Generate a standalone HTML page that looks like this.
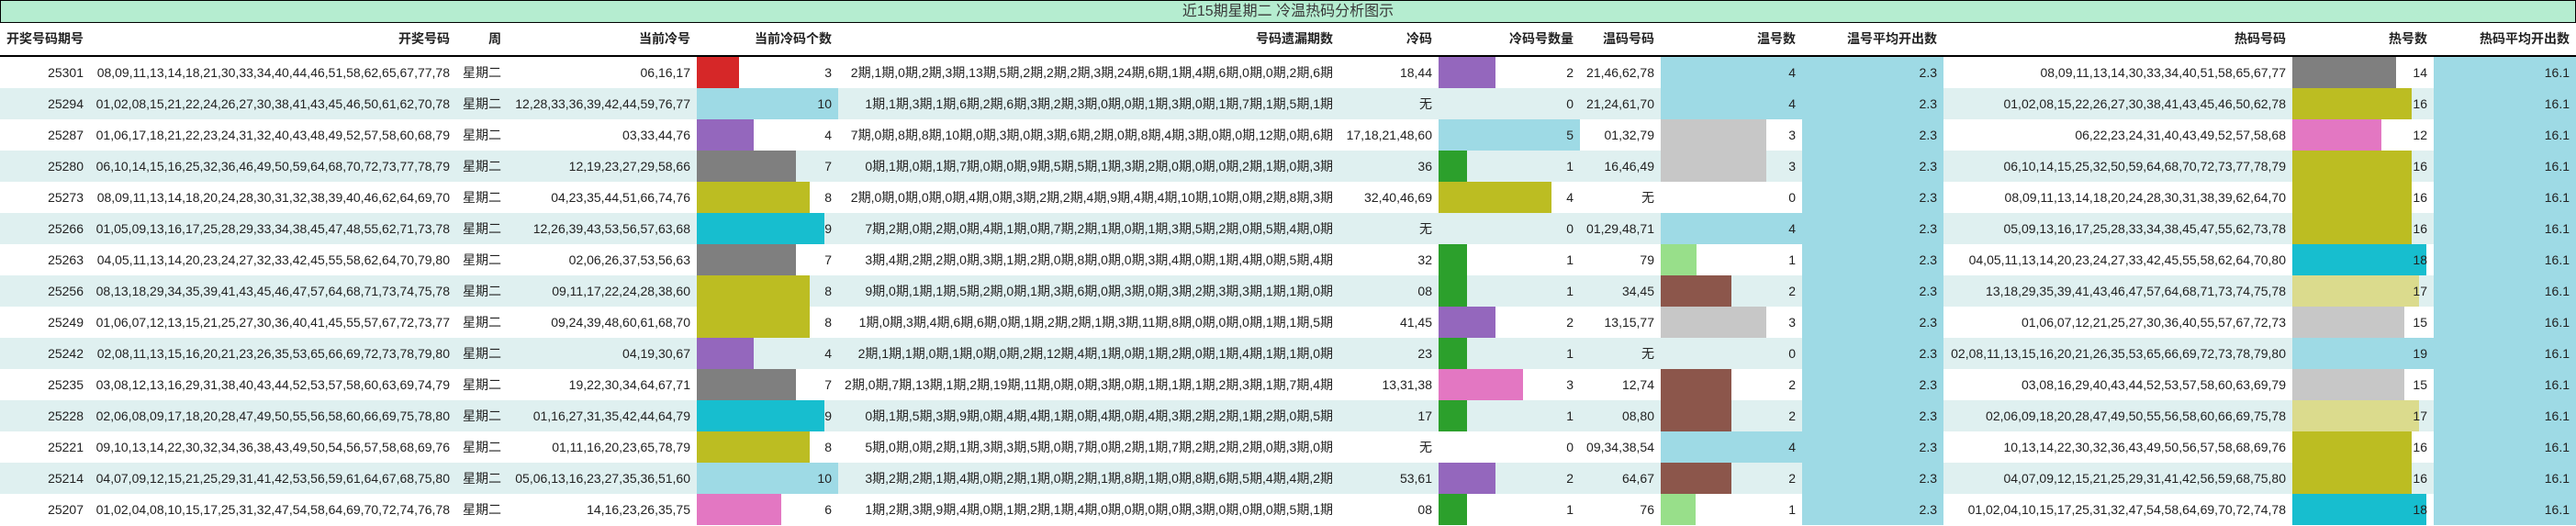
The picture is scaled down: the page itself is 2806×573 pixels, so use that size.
<!DOCTYPE html>
<html><head><meta charset="utf-8">
<style>
html,body{margin:0;padding:0;background:#fff;}
body{width:2806px;height:573px;position:relative;overflow:hidden;font-family:"Liberation Sans","Noto Sans CJK SC",sans-serif;color:#222;}
.title{position:absolute;left:0;top:0;width:2806px;height:25px;box-sizing:border-box;border:1px solid #000;background:#b5edd0;text-align:center;font-size:16px;line-height:23px;color:#3a3a3a;}
table{position:absolute;left:0;top:25px;border-collapse:collapse;table-layout:fixed;width:2806px;font-size:14px;}
td{padding:0 7px 0 0;text-align:right;white-space:nowrap;overflow:visible;height:34px;line-height:34px;position:relative;}
tr.h td{font-weight:bold;height:35px;border-bottom:2px solid #000;line-height:35px;}
tr.s td{background:#dff0f0;}
td.c,tr.s td.c{background:#9edae5;}
td i{position:absolute;left:0;top:0;bottom:0;}
td span{position:relative;z-index:1;}
</style></head><body>
<div class="title">近15期星期二 冷温热码分析图示</div>
<table>
<colgroup><col style="width:98px"><col style="width:399px"><col style="width:56px"><col style="width:206px"><col style="width:154px"><col style="width:546px"><col style="width:108px"><col style="width:154px"><col style="width:88px"><col style="width:154px"><col style="width:154px"><col style="width:380px"><col style="width:154px"><col style="width:155px"></colgroup>
<tr class="h"><td>开奖号码期号</td><td>开奖号码</td><td>周</td><td>当前冷号</td><td>当前冷码个数</td><td>号码遗漏期数</td><td>冷码</td><td>冷码号数量</td><td>温码号码</td><td>温号数</td><td>温号平均开出数</td><td>热码号码</td><td>热号数</td><td>热码平均开出数</td></tr>

<tr><td>25301</td><td>08,09,11,13,14,18,21,30,33,34,40,44,46,51,58,62,65,67,77,78</td><td>星期二</td><td>06,16,17</td><td><i style="width:46px;background:#d62728"></i><span>3</span></td><td>2期,1期,0期,2期,3期,13期,5期,2期,2期,2期,3期,24期,6期,1期,4期,6期,0期,0期,2期,6期</td><td>18,44</td><td><i style="width:62px;background:#9467bd"></i><span>2</span></td><td>21,46,62,78</td><td><i style="width:154px;background:#9edae5"></i><span>4</span></td><td class="c">2.3</td><td>08,09,11,13,14,30,33,34,40,51,58,65,67,77</td><td><i style="width:113px;background:#7f7f7f"></i><span>14</span></td><td class="c">16.1</td></tr>

<tr class="s"><td>25294</td><td>01,02,08,15,21,22,24,26,27,30,38,41,43,45,46,50,61,62,70,78</td><td>星期二</td><td>12,28,33,36,39,42,44,59,76,77</td><td><i style="width:154px;background:#9edae5"></i><span>10</span></td><td>1期,1期,3期,1期,6期,2期,6期,3期,2期,3期,0期,0期,1期,3期,0期,1期,7期,1期,5期,1期</td><td>无</td><td><span>0</span></td><td>21,24,61,70</td><td><i style="width:154px;background:#9edae5"></i><span>4</span></td><td class="c">2.3</td><td>01,02,08,15,22,26,27,30,38,41,43,45,46,50,62,78</td><td><i style="width:130px;background:#bcbd22"></i><span>16</span></td><td class="c">16.1</td></tr>

<tr><td>25287</td><td>01,06,17,18,21,22,23,24,31,32,40,43,48,49,52,57,58,60,68,79</td><td>星期二</td><td>03,33,44,76</td><td><i style="width:62px;background:#9467bd"></i><span>4</span></td><td>7期,0期,8期,8期,10期,0期,3期,0期,3期,6期,2期,0期,8期,4期,3期,0期,0期,12期,0期,6期</td><td>17,18,21,48,60</td><td><i style="width:154px;background:#9edae5"></i><span>5</span></td><td>01,32,79</td><td><i style="width:115px;background:#c7c7c7"></i><span>3</span></td><td class="c">2.3</td><td>06,22,23,24,31,40,43,49,52,57,58,68</td><td><i style="width:97px;background:#e377c2"></i><span>12</span></td><td class="c">16.1</td></tr>

<tr class="s"><td>25280</td><td>06,10,14,15,16,25,32,36,46,49,50,59,64,68,70,72,73,77,78,79</td><td>星期二</td><td>12,19,23,27,29,58,66</td><td><i style="width:108px;background:#7f7f7f"></i><span>7</span></td><td>0期,1期,0期,1期,7期,0期,0期,9期,5期,5期,1期,3期,2期,0期,0期,0期,2期,1期,0期,3期</td><td>36</td><td><i style="width:31px;background:#2ca02c"></i><span>1</span></td><td>16,46,49</td><td><i style="width:115px;background:#c7c7c7"></i><span>3</span></td><td class="c">2.3</td><td>06,10,14,15,25,32,50,59,64,68,70,72,73,77,78,79</td><td><i style="width:130px;background:#bcbd22"></i><span>16</span></td><td class="c">16.1</td></tr>

<tr><td>25273</td><td>08,09,11,13,14,18,20,24,28,30,31,32,38,39,40,46,62,64,69,70</td><td>星期二</td><td>04,23,35,44,51,66,74,76</td><td><i style="width:123px;background:#bcbd22"></i><span>8</span></td><td>2期,0期,0期,0期,0期,4期,0期,3期,2期,2期,4期,9期,4期,4期,10期,10期,0期,2期,8期,3期</td><td>32,40,46,69</td><td><i style="width:123px;background:#bcbd22"></i><span>4</span></td><td>无</td><td><span>0</span></td><td class="c">2.3</td><td>08,09,11,13,14,18,20,24,28,30,31,38,39,62,64,70</td><td><i style="width:130px;background:#bcbd22"></i><span>16</span></td><td class="c">16.1</td></tr>

<tr class="s"><td>25266</td><td>01,05,09,13,16,17,25,28,29,33,34,38,45,47,48,55,62,71,73,78</td><td>星期二</td><td>12,26,39,43,53,56,57,63,68</td><td><i style="width:139px;background:#17becf"></i><span>9</span></td><td>7期,2期,0期,2期,0期,4期,1期,0期,7期,2期,1期,0期,1期,3期,5期,2期,0期,5期,4期,0期</td><td>无</td><td><span>0</span></td><td>01,29,48,71</td><td><i style="width:154px;background:#9edae5"></i><span>4</span></td><td class="c">2.3</td><td>05,09,13,16,17,25,28,33,34,38,45,47,55,62,73,78</td><td><i style="width:130px;background:#bcbd22"></i><span>16</span></td><td class="c">16.1</td></tr>

<tr><td>25263</td><td>04,05,11,13,14,20,23,24,27,32,33,42,45,55,58,62,64,70,79,80</td><td>星期二</td><td>02,06,26,37,53,56,63</td><td><i style="width:108px;background:#7f7f7f"></i><span>7</span></td><td>3期,4期,2期,2期,0期,3期,1期,2期,0期,8期,0期,0期,3期,4期,0期,1期,4期,0期,5期,4期</td><td>32</td><td><i style="width:31px;background:#2ca02c"></i><span>1</span></td><td>79</td><td><i style="width:39px;background:#98df8a"></i><span>1</span></td><td class="c">2.3</td><td>04,05,11,13,14,20,23,24,27,33,42,45,55,58,62,64,70,80</td><td><i style="width:146px;background:#17becf"></i><span>18</span></td><td class="c">16.1</td></tr>

<tr class="s"><td>25256</td><td>08,13,18,29,34,35,39,41,43,45,46,47,57,64,68,71,73,74,75,78</td><td>星期二</td><td>09,11,17,22,24,28,38,60</td><td><i style="width:123px;background:#bcbd22"></i><span>8</span></td><td>9期,0期,1期,1期,5期,2期,0期,1期,3期,6期,0期,3期,0期,3期,2期,3期,3期,1期,1期,0期</td><td>08</td><td><i style="width:31px;background:#2ca02c"></i><span>1</span></td><td>34,45</td><td><i style="width:77px;background:#8c564b"></i><span>2</span></td><td class="c">2.3</td><td>13,18,29,35,39,41,43,46,47,57,64,68,71,73,74,75,78</td><td><i style="width:138px;background:#dbdb8d"></i><span>17</span></td><td class="c">16.1</td></tr>

<tr><td>25249</td><td>01,06,07,12,13,15,21,25,27,30,36,40,41,45,55,57,67,72,73,77</td><td>星期二</td><td>09,24,39,48,60,61,68,70</td><td><i style="width:123px;background:#bcbd22"></i><span>8</span></td><td>1期,0期,3期,4期,6期,6期,0期,1期,2期,2期,1期,3期,11期,8期,0期,0期,0期,1期,1期,5期</td><td>41,45</td><td><i style="width:62px;background:#9467bd"></i><span>2</span></td><td>13,15,77</td><td><i style="width:115px;background:#c7c7c7"></i><span>3</span></td><td class="c">2.3</td><td>01,06,07,12,21,25,27,30,36,40,55,57,67,72,73</td><td><i style="width:122px;background:#c7c7c7"></i><span>15</span></td><td class="c">16.1</td></tr>

<tr class="s"><td>25242</td><td>02,08,11,13,15,16,20,21,23,26,35,53,65,66,69,72,73,78,79,80</td><td>星期二</td><td>04,19,30,67</td><td><i style="width:62px;background:#9467bd"></i><span>4</span></td><td>2期,1期,1期,0期,1期,0期,0期,2期,12期,4期,1期,0期,1期,2期,0期,1期,4期,1期,1期,0期</td><td>23</td><td><i style="width:31px;background:#2ca02c"></i><span>1</span></td><td>无</td><td><span>0</span></td><td class="c">2.3</td><td>02,08,11,13,15,16,20,21,26,35,53,65,66,69,72,73,78,79,80</td><td><i style="width:154px;background:#9edae5"></i><span>19</span></td><td class="c">16.1</td></tr>

<tr><td>25235</td><td>03,08,12,13,16,29,31,38,40,43,44,52,53,57,58,60,63,69,74,79</td><td>星期二</td><td>19,22,30,34,64,67,71</td><td><i style="width:108px;background:#7f7f7f"></i><span>7</span></td><td>2期,0期,7期,13期,1期,2期,19期,11期,0期,0期,3期,0期,1期,1期,1期,2期,3期,1期,7期,4期</td><td>13,31,38</td><td><i style="width:92px;background:#e377c2"></i><span>3</span></td><td>12,74</td><td><i style="width:77px;background:#8c564b"></i><span>2</span></td><td class="c">2.3</td><td>03,08,16,29,40,43,44,52,53,57,58,60,63,69,79</td><td><i style="width:122px;background:#c7c7c7"></i><span>15</span></td><td class="c">16.1</td></tr>

<tr class="s"><td>25228</td><td>02,06,08,09,17,18,20,28,47,49,50,55,56,58,60,66,69,75,78,80</td><td>星期二</td><td>01,16,27,31,35,42,44,64,79</td><td><i style="width:139px;background:#17becf"></i><span>9</span></td><td>0期,1期,5期,3期,9期,0期,4期,4期,1期,0期,4期,0期,4期,3期,2期,2期,1期,2期,0期,5期</td><td>17</td><td><i style="width:31px;background:#2ca02c"></i><span>1</span></td><td>08,80</td><td><i style="width:77px;background:#8c564b"></i><span>2</span></td><td class="c">2.3</td><td>02,06,09,18,20,28,47,49,50,55,56,58,60,66,69,75,78</td><td><i style="width:138px;background:#dbdb8d"></i><span>17</span></td><td class="c">16.1</td></tr>

<tr><td>25221</td><td>09,10,13,14,22,30,32,34,36,38,43,49,50,54,56,57,58,68,69,76</td><td>星期二</td><td>01,11,16,20,23,65,78,79</td><td><i style="width:123px;background:#bcbd22"></i><span>8</span></td><td>5期,0期,0期,2期,1期,3期,3期,5期,0期,7期,0期,2期,1期,7期,2期,2期,2期,0期,3期,0期</td><td>无</td><td><span>0</span></td><td>09,34,38,54</td><td><i style="width:154px;background:#9edae5"></i><span>4</span></td><td class="c">2.3</td><td>10,13,14,22,30,32,36,43,49,50,56,57,58,68,69,76</td><td><i style="width:130px;background:#bcbd22"></i><span>16</span></td><td class="c">16.1</td></tr>

<tr class="s"><td>25214</td><td>04,07,09,12,15,21,25,29,31,41,42,53,56,59,61,64,67,68,75,80</td><td>星期二</td><td>05,06,13,16,23,27,35,36,51,60</td><td><i style="width:154px;background:#9edae5"></i><span>10</span></td><td>3期,2期,2期,1期,4期,0期,2期,1期,0期,2期,1期,8期,1期,0期,8期,6期,5期,4期,4期,2期</td><td>53,61</td><td><i style="width:62px;background:#9467bd"></i><span>2</span></td><td>64,67</td><td><i style="width:77px;background:#8c564b"></i><span>2</span></td><td class="c">2.3</td><td>04,07,09,12,15,21,25,29,31,41,42,56,59,68,75,80</td><td><i style="width:130px;background:#bcbd22"></i><span>16</span></td><td class="c">16.1</td></tr>

<tr><td>25207</td><td>01,02,04,08,10,15,17,25,31,32,47,54,58,64,69,70,72,74,76,78</td><td>星期二</td><td>14,16,23,26,35,75</td><td><i style="width:92px;background:#e377c2"></i><span>6</span></td><td>1期,2期,3期,9期,4期,0期,1期,2期,1期,4期,0期,0期,0期,0期,3期,0期,0期,0期,5期,1期</td><td>08</td><td><i style="width:31px;background:#2ca02c"></i><span>1</span></td><td>76</td><td><i style="width:38px;background:#98df8a"></i><span>1</span></td><td class="c">2.3</td><td>01,02,04,10,15,17,25,31,32,47,54,58,64,69,70,72,74,78</td><td><i style="width:146px;background:#17becf"></i><span>18</span></td><td class="c">16.1</td></tr>
</table>
</body></html>
